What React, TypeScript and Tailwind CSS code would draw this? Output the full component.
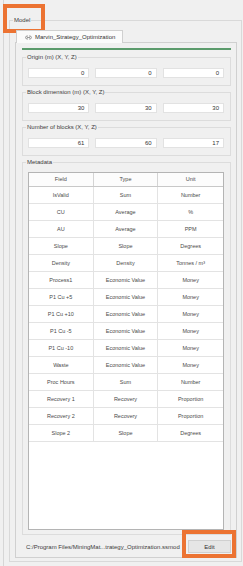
import React from 'react';
import { Link2 } from 'lucide-react';

type Row = { field: string; type: string; unit: string };

const rows: Row[] = [
  { field: 'IsValid', type: 'Sum', unit: 'Number' },
  { field: 'CU', type: 'Average', unit: '%' },
  { field: 'AU', type: 'Average', unit: 'PPM' },
  { field: 'Slope', type: 'Slope', unit: 'Degrees' },
  { field: 'Density', type: 'Density', unit: 'Tonnes / m³' },
  { field: 'Process1', type: 'Economic Value', unit: 'Money' },
  { field: 'P1 Cu +5', type: 'Economic Value', unit: 'Money' },
  { field: 'P1 Cu +10', type: 'Economic Value', unit: 'Money' },
  { field: 'P1 Cu -5', type: 'Economic Value', unit: 'Money' },
  { field: 'P1 Cu -10', type: 'Economic Value', unit: 'Money' },
  { field: 'Waste', type: 'Economic Value', unit: 'Money' },
  { field: 'Proc Hours', type: 'Sum', unit: 'Number' },
  { field: 'Recovery 1', type: 'Recovery', unit: 'Proportion' },
  { field: 'Recovery 2', type: 'Recovery', unit: 'Proportion' },
  { field: 'Slope 2', type: 'Slope', unit: 'Degrees' },
];

// Windows-style group box with label sitting on the top border
function GroupBox({ label, className = '', children }: { label: string; className?: string; children: React.ReactNode }) {
  return (
    <fieldset className={`border border-[#dcdcdc] ${className}`}>
      <legend className="ml-[3px] px-[1px] text-[6px] leading-[8px] text-[#3c3c3c]">{label}</legend>
      {children}
    </fieldset>
  );
}

function XYZ({ values }: { values: number[] }) {
  return (
    <div className="flex gap-[6px] pl-[5px] pr-[6px] pt-[7px] pb-[7px]">
      {values.map((v, i) => (
        <div
          key={i}
          className="flex-1 h-[10px] bg-white border border-[#e2e2e2] flex items-center justify-end pr-[4px] text-[6px] leading-[8px] text-[#333]"
        >
          {v}
        </div>
      ))}
    </div>
  );
}

export default function App() {
  return (
    <div className="relative w-[243px] h-[566px] bg-[#f0f0f0] flex overflow-hidden font-['Liberation_Sans',Arial,sans-serif] select-none">
      {/* edge of the neighbouring panel */}
      <div className="w-[4px] shrink-0 border-r border-[#d6d6d6]" />

      {/* Model group */}
      <fieldset className="ml-[5px] mr-[1px] mt-[16px] mb-[4px] flex-1 min-w-0 border border-[#d9d9d9] flex flex-col">
        <legend className="ml-[3px] px-[1px] text-[6px] leading-[8px] text-[#3c3c3c]">Model</legend>

        <div className="flex flex-col h-full pt-[6px] pl-[5px] pr-[4px] pb-[3px]">
          {/* tab header */}
          <div className="relative z-10 -mb-px ml-[1px] h-[13px] w-[107px] bg-[#fbfbfb] border border-b-0 border-[#d0d0d0] flex items-center gap-[3px] pl-[8px] text-[6px] leading-[8px] text-[#333]">
            <Link2 className="w-[7px] h-[7px] text-[#777]" strokeWidth={2.5} />
            <span>Marvin_Strategy_Optimization</span>
          </div>

          {/* tab panel */}
          <div className="flex-1 min-h-0 border border-[#d0d0d0] flex flex-col pl-[6px] pr-[5px] pt-[5px] pb-[4px]">
            <div className="h-[2px] bg-[#5b9b6c]" />

            <GroupBox label="Origin (m) (X, Y, Z)" className="mt-[3px]">
              <XYZ values={[0, 0, 0]} />
            </GroupBox>

            <GroupBox label="Block dimension (m) (X, Y, Z)" className="mt-[2px]">
              <XYZ values={[30, 30, 30]} />
            </GroupBox>

            <GroupBox label="Number of blocks (X, Y, Z)" className="mt-[2px]">
              <XYZ values={[61, 60, 17]} />
            </GroupBox>

            <GroupBox label="Metadata" className="mt-[2px] flex-1 min-h-0 flex flex-col">
              <div className="flex flex-col h-full pl-[5px] pr-[6px] pt-[6px] pb-[4px]">
                <div className="flex-1 bg-white border border-[#b4b4b4] text-[5.5px] leading-[7px] text-[#4a4a4a]">
                  <div className="grid grid-cols-3 h-[14px] border-b border-[#c8c8c8] bg-[#fcfcfc]">
                    <div className="flex items-center justify-center border-r border-[#d4d4d4]">Field</div>
                    <div className="flex items-center justify-center border-r border-[#d4d4d4]">Type</div>
                    <div className="flex items-center justify-center">Unit</div>
                  </div>
                  {rows.map((r, i) => (
                    <div key={i} className="grid grid-cols-3 h-[17px] border-b border-[#e3e3e3]">
                      <div className="flex items-center justify-center border-r border-[#e3e3e3]">{r.field}</div>
                      <div className="flex items-center justify-center border-r border-[#e3e3e3]">{r.type}</div>
                      <div className="flex items-center justify-center">{r.unit}</div>
                    </div>
                  ))}
                </div>
              </div>
            </GroupBox>

            {/* file path + edit */}
            <div className="mt-[5px] flex items-center h-[13px]">
              <div className="flex-1 min-w-0 ml-[4px] overflow-hidden whitespace-nowrap text-[6px] leading-[8px] text-[#3c3c3c]">
                C:/Program Files/MiningMat...trategy_Optimization.ssmod
              </div>
              <button className="w-[43px] h-[13px] shrink-0 bg-[#e6e6e6] border border-[#d0d0d0] text-[6px] leading-[8px] text-[#333]">
                Edit
              </button>
            </div>
          </div>
        </div>
      </fieldset>

      {/* highlight callouts */}
      <div className="absolute left-[3px] top-[4px] w-[42px] h-[29px] border-[4px] border-[#ec7332] pointer-events-none" />
      <div className="absolute left-[182px] top-[530px] w-[54px] h-[28px] border-[4px] border-[#ec7332] pointer-events-none" />
    </div>
  );
}
